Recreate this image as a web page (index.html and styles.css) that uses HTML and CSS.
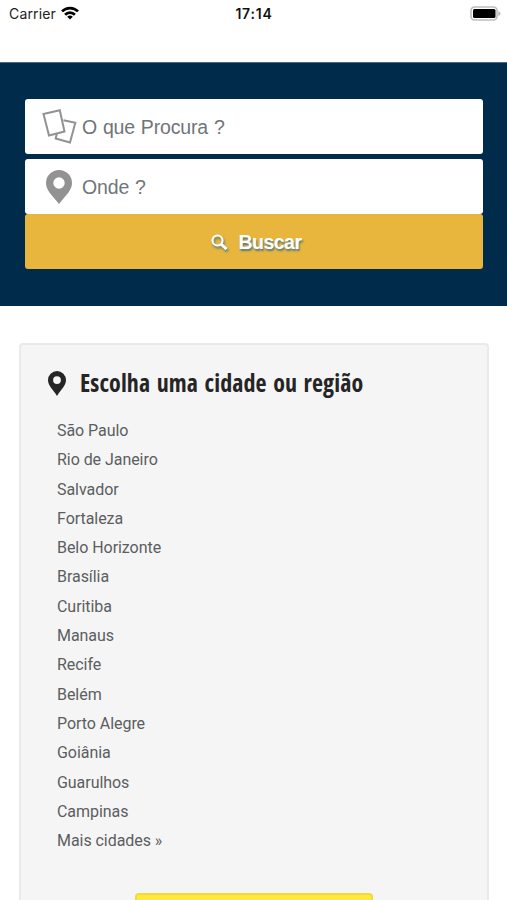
FILE: index.html
```html
<!DOCTYPE html>
<html lang="pt-BR">
<head>
<meta charset="utf-8">
<title>Buscar</title>
<link rel="stylesheet" href="styles.css">
</head>
<body>
<header class="status">
  <div class="carrier"><span>Carrier</span>
    <svg class="wifi" viewBox="0 0 18 14"><g fill="none" stroke="#000" stroke-width="2.7"><path d="M1 5.400C5.400.9 12.600.9 17 5.400"/><path d="M4.100 8.700C6.800 5.900 11.200 5.900 13.900 8.700"/></g><path d="M9 13.600 6.200 10.800Q9 8.300 11.800 10.800Z"/></svg>
  </div>
  <div class="clock">17:14</div>
  <svg class="battery" viewBox="0 0 31 15"><rect x="1" y="1" width="26" height="13" rx="3.500" fill="#fff" stroke="#bdbdbd" stroke-width="1.600"/><rect x="3" y="3" width="22.500" height="9" rx="1.500"/><path d="M28.300 5Q30.500 6 30.500 7.500T28.300 10Z" fill="#b5b5b5"/></svg>
</header>
<form class="search">
  <label class="field">
    <svg class="cards" viewBox="0 0 36 36"><g fill="none" stroke="#929292" stroke-width="2"><path d="M1.500 5 17.800 1.300 22.500 22.500 7 26.500Z"/><path d="M21.500 11.300 33.300 13.800 28 33.500 13.700 29.500 14.800 24.800"/></g></svg>
    <span>O que Procura ?</span>
  </label>
  <label class="field">
    <svg class="pin" viewBox="0 0 26 34"><path fill="#929292" fill-rule="evenodd" d="M13 0A13 13 0 0 0 0 13C0 20 5 24 13 34C21 24 26 20 26 13A13 13 0 0 0 13 0ZM13 7.300A5.700 5.700 0 1 1 13 18.700A5.700 5.700 0 1 1 13 7.300Z"/></svg>
    <span>Onde ?</span>
  </label>
  <button class="submit" type="button">
    <svg class="lens" viewBox="0 0 17 17"><g fill="none" stroke="#fff"><circle cx="6.500" cy="6.500" r="5" stroke-width="2.200"/><path d="M10 10 15.500 15.200" stroke-width="3"/></g></svg>
    <span>Buscar</span>
  </button>
</form>
<section class="panel">
  <h2 class="title">
    <svg class="marker" viewBox="0 0 18 25"><path fill="#252525" fill-rule="evenodd" d="M9 0A9 9 0 0 0 0 9C0 15 5 18 9 25C13 18 18 15 18 9A9 9 0 0 0 9 0ZM9 5.200A3.900 3.900 0 1 1 9 13A3.900 3.900 0 1 1 9 5.200Z"/></svg>
    <span>Escolha uma cidade ou região</span>
  </h2>
  <ul class="cities">
    <li>São Paulo</li>
    <li>Rio de Janeiro</li>
    <li>Salvador</li>
    <li>Fortaleza</li>
    <li>Belo Horizonte</li>
    <li>Brasília</li>
    <li>Curitiba</li>
    <li>Manaus</li>
    <li>Recife</li>
    <li>Belém</li>
    <li>Porto Alegre</li>
    <li>Goiânia</li>
    <li>Guarulhos</li>
    <li>Campinas</li>
    <li>Mais cidades »</li>
  </ul>
  <div class="cta"></div>
</section>
</body>
</html>
```
FILE: styles.css
```css
* { box-sizing: border-box; }
body {
  margin: 0;
  height: 900px;
  overflow: hidden;
  background: #fff;
  font-family: Roboto, sans-serif;
}
svg { display: block; flex: none; }
.status {
  height: 62px;
  padding: 5px 6px 0 9px;
  display: grid;
  grid-template-columns: 1fr auto 1fr;
  align-items: start;
  font-family: Inter, sans-serif;
  font-size: 14px;
  line-height: 18px;
  color: #222;
}
.carrier { display: flex; gap: 5px; letter-spacing: 0.15px; }
.wifi { width: 18px; height: 14px; margin-top: 1px; }
.clock { margin-left: -2px; font-weight: 600; letter-spacing: 0.8px; color: #111; }
.battery { width: 31px; height: 15px; margin-top: 1px; justify-self: end; }
.search {
  height: 244px;
  padding: 36px 24px 0 25px;
  background: #002b4b;
  border-top: 1px solid #4d6b82;
  font-family: "Liberation Sans", sans-serif;
}
.field {
  display: flex;
  align-items: center;
  height: 55px;
  margin-bottom: 5px;
  padding-left: 17px;
  border-radius: 3px;
  background: #fff;
  color: #70757a;
  font-size: 19.500px;
  letter-spacing: -0.15px;
  word-spacing: 0.6px;
}
.field + .field { margin-bottom: 0; }
.field span { padding-top: 1px; }
.cards { width: 36px; height: 36px; margin-right: 4px; }
.pin { width: 26px; height: 34px; margin: 0 10px 0 4px; }
.submit {
  display: flex;
  align-items: center;
  justify-content: center;
  gap: 10px;
  width: 100%;
  height: 55px;
  padding: 2px 0 0 5px;
  border: 0;
  border-radius: 3px;
  background: #e8b63d;
  color: #fff;
  font: bold 19.500px "Liberation Sans", sans-serif;
  letter-spacing: -0.5px;
  text-shadow: 1px 2px 2px #52797c;
}
.lens { width: 17px; height: 17px; filter: drop-shadow(1px 2px 1px #52797c); }
.panel {
  height: 557px;
  margin: 37px 18px 0 19px;
  padding: 23px 0 0 27px;
  border: 2px solid #eaeaea;
  border-bottom: 0;
  border-radius: 4px 4px 0 0;
  background: #f5f5f5;
}
.title {
  display: flex;
  align-items: center;
  gap: 14px;
  height: 30px;
  margin: 0;
  color: #252525;
  font: bold 24px/30px "Open Sans", sans-serif;
  font-stretch: 75%;
  letter-spacing: 0.1px;
  word-spacing: 2.1px;
  white-space: nowrap;
}
.marker { width: 18px; height: 25px; }
.cities {
  margin: 18px 0 0;
  padding: 0 0 0 9px;
  list-style: none;
  color: #5b5e61;
  font-size: 16px;
  letter-spacing: -0.05px;
  line-height: 29.300px;
}
.cta {
  width: 238px;
  height: 8px;
  margin: 37.500px 0 0 87px;
  border: 2px solid #f5d93a;
  border-bottom: 0;
  border-radius: 4px 4px 0 0;
  background: #ffe93b;
}
```
